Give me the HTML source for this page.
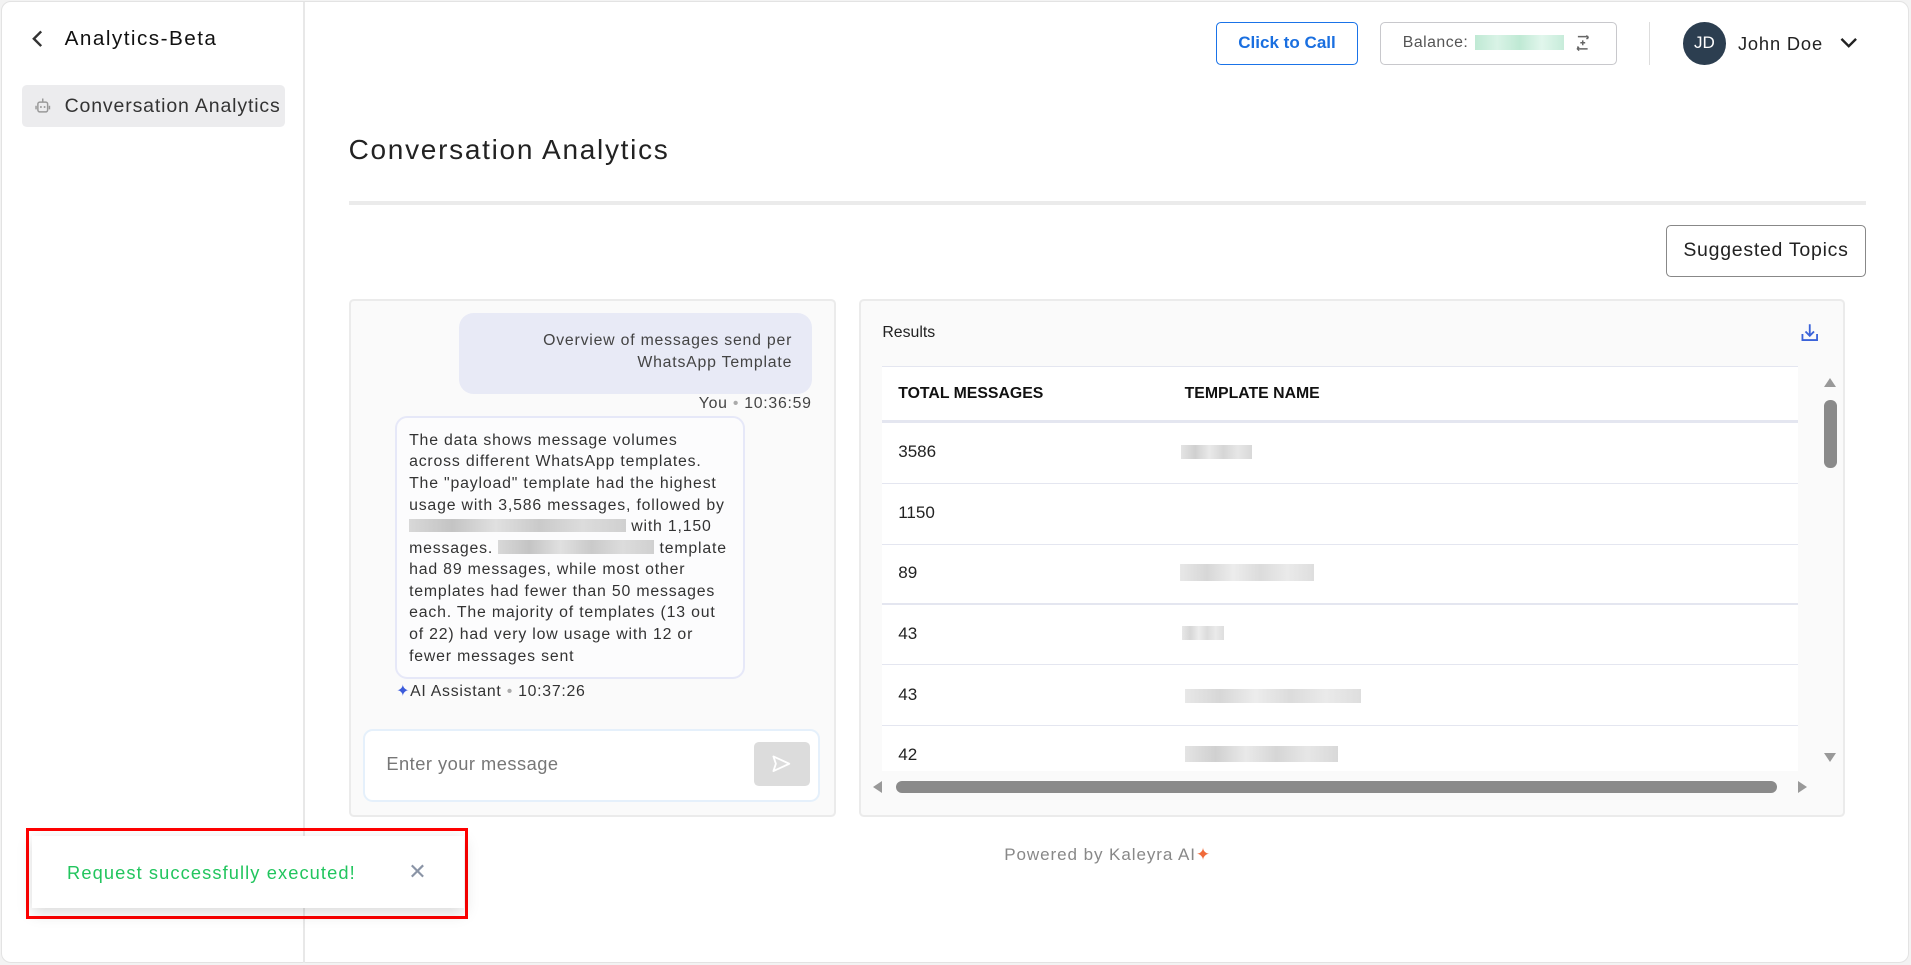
<!DOCTYPE html>
<html><head><meta charset="utf-8">
<style>
*{box-sizing:border-box;margin:0;padding:0}
html,body{width:1911px;height:965px;overflow:hidden;background:#f3f3f3}
#w{zoom:1.21875;width:1568px;height:792px;position:relative;font-family:"Liberation Sans",sans-serif;color:#222}
.a{position:absolute}
.frame{left:1px;top:1px;width:1565px;height:789px;background:#fff;border:1px solid #e3e3e3;border-radius:8px}
.blur{position:absolute;background:linear-gradient(90deg,#d8d8d8,#bcbcbc 20%,#e0e0e0 40%,#c4c4c4 60%,#dcdcdc 80%,#c8c8c8)}
.ib{display:inline-block;height:11px;vertical-align:-1px;background:linear-gradient(90deg,#d8d8d8,#c4c4c4 20%,#e0e0e0 40%,#cacaca 60%,#dcdcdc 80%,#d0d0d0)}
.tr{position:absolute;left:0;width:751px;height:1px;background:#e4e6f0}
.tv{position:absolute;left:13px;font-size:14px;color:#222}
</style></head><body><div id="w">
<div class="a frame"></div>
<div class="a" style="left:249px;top:2px;width:1px;height:788px;background:#e8e8e8"></div>
<svg class="a" style="left:24px;top:24px" width="14" height="16" viewBox="0 0 14 16"><path d="M10 2L4 8l6 6" fill="none" stroke="#333" stroke-width="2"/></svg>
<div class="a" style="left:53px;top:22px;font-size:17px;color:#111;letter-spacing:1.2px">Analytics-Beta</div>
<div class="a" style="left:18px;top:70px;width:216px;height:34px;background:#ececee;border-radius:4px"></div>
<svg class="a" style="left:27px;top:79px" width="16" height="16" viewBox="0 0 16 16"><rect x="4" y="5" width="8" height="8" rx="1.5" fill="none" stroke="#999" stroke-width="1.2"/><path d="M8 2v3M2.5 8v3M13.5 8v3" stroke="#999" stroke-width="1.2"/><circle cx="6.5" cy="9" r=".8" fill="#999"/><circle cx="9.5" cy="9" r=".8" fill="#999"/></svg>
<div class="a" style="left:53px;top:78px;font-size:16px;color:#333;letter-spacing:.7px">Conversation Analytics</div>

<div class="a" style="left:998px;top:18px;width:116px;height:35px;border:1px solid #1a73e8;border-radius:4px;color:#1a6fe0;font-weight:bold;font-size:14px;text-align:center;line-height:33px">Click to Call</div>
<div class="a" style="left:1132px;top:18px;width:195px;height:35px;border:1px solid #c8c8cc;border-radius:4px"></div>
<div class="a" style="left:1151px;top:28px;font-size:13px;color:#555;letter-spacing:.4px">Balance:</div>
<div class="a" style="left:1210px;top:29px;width:73px;height:12px;background:linear-gradient(90deg,#bfe9d4,#d9f3e6,#bfe9d4,#e1f6ec,#c7ecda)"></div>
<svg class="a" style="left:1291px;top:27px" width="16" height="16" viewBox="0 0 16 16"><path d="M4 3h8v2M12 13H4v-2" fill="none" stroke="#666" stroke-width="1.2"/><path d="M8 6v4M6 8h4" stroke="#666" stroke-width="1.2"/><path d="M11 2l1.5 1.5L11 5M5 11.5L3.5 13 5 14.5" fill="none" stroke="#666" stroke-width="1"/></svg>
<div class="a" style="left:1353px;top:18px;width:1px;height:35px;background:#ddd"></div>
<div class="a" style="left:1381px;top:18px;width:35px;height:35px;border-radius:50%;background:#2c3e50;color:#fff;font-size:14px;text-align:center;line-height:35px">JD</div>
<div class="a" style="left:1426px;top:27px;font-size:15px;color:#222;letter-spacing:.7px">John Doe</div>
<svg class="a" style="left:1509px;top:28px" width="16" height="14" viewBox="0 0 16 14"><path d="M2 4l6 6 6-6" fill="none" stroke="#222" stroke-width="2"/></svg>

<div class="a" style="left:286px;top:110px;font-size:23px;color:#222;letter-spacing:1.4px">Conversation Analytics</div>
<div class="a" style="left:286px;top:165px;width:1245px;height:3px;background:#ebebeb"></div>
<div class="a" style="left:1367px;top:185px;width:164px;height:42px;border:1px solid #888;border-radius:4px;font-size:16px;color:#222;text-align:center;line-height:40px;letter-spacing:.6px">Suggested Topics</div>

<div class="a" style="left:286px;top:245px;width:400px;height:425px;background:#fafafa;border:2px solid #ebebeb;border-radius:4px"></div>
<div class="a" style="left:377px;top:257px;width:289px;height:66px;background:#e8eaf6;border-radius:12px;font-size:13px;color:#444;text-align:right;padding:14px 16px 0 0;line-height:18px;letter-spacing:.65px">Overview of messages send per<br>WhatsApp Template</div>
<div class="a" style="left:520px;top:324px;width:146px;text-align:right;font-size:13px;color:#444;letter-spacing:.6px">You <span style="color:#aaa">•</span> 10:36:59</div>
<div class="a" style="left:324px;top:341px;width:287px;height:216px;background:#fcfcfd;border:2px solid #e6e8f8;border-radius:10px;font-size:13px;color:#333;line-height:17.7px;padding:10px 0 0 10px;letter-spacing:.68px;white-space:nowrap">The data shows message volumes<br>across different WhatsApp templates.<br>The "payload" template had the highest<br>usage with 3,586 messages, followed by<br><span class="ib" style="width:178px"></span> with 1,150<br>messages. <span class="ib" style="width:128px"></span> template<br>had 89 messages, while most other<br>templates had fewer than 50 messages<br>each. The majority of templates (13 out<br>of 22) had very low usage with 12 or<br>fewer messages sent</div>
<div class="a" style="left:325px;top:559px;font-size:13px;color:#333;letter-spacing:.6px"><span style="color:#3b5bdb">✦</span>AI Assistant <span style="color:#aaa">•</span> 10:37:26</div>
<div class="a" style="left:298px;top:598px;width:375px;height:60px;background:#fff;border:2px solid #e5f0fb;border-radius:8px"></div>
<div class="a" style="left:317px;top:618px;font-size:15px;color:#777;letter-spacing:.4px">Enter your message</div>
<div class="a" style="left:619px;top:609px;width:46px;height:36px;background:#dcdcdc;border-radius:4px"></div>
<svg class="a" style="left:633px;top:619px" width="17" height="16" viewBox="0 0 17 16"><path d="M2 2l13 6-13 6 2-6z" fill="none" stroke="#fff" stroke-width="1.5" stroke-linejoin="round"/></svg>

<div class="a" style="left:705px;top:245px;width:809px;height:425px;background:#fafafa;border:2px solid #ebebeb;border-radius:4px"></div>
<div class="a" style="left:724px;top:266px;font-size:13px;color:#222">Results</div>
<svg class="a" style="left:1477px;top:265px" width="16" height="16" viewBox="0 0 16 16"><path d="M8 1v9M4.5 7L8 10.5 11.5 7M2 9v5h12V9" fill="none" stroke="#3b63d9" stroke-width="1.5"/></svg>
<div class="a" style="left:724px;top:300px;width:751px;height:333px;background:#fff;overflow:hidden">
 <div class="tr" style="top:0"></div>
 <div class="a" style="left:13px;top:16px;font-size:13px;font-weight:bold;color:#111">TOTAL MESSAGES</div>
 <div class="a" style="left:248px;top:16px;font-size:13px;font-weight:bold;color:#111">TEMPLATE NAME</div>
 <div class="tr" style="top:45px;height:2px"></div>
 <div class="tv" style="top:63px">3586</div><div class="blur" style="left:245px;top:65px;width:58px;height:12px;opacity:.7"></div>
 <div class="tr" style="top:96px"></div>
 <div class="tv" style="top:113px">1150</div>
 <div class="tr" style="top:146px"></div>
 <div class="tv" style="top:162px">89</div><div class="blur" style="left:244px;top:163px;width:110px;height:14px;opacity:.6"></div>
 <div class="tr" style="top:195px"></div>
 <div class="tv" style="top:212px">43</div><div class="blur" style="left:246px;top:214px;width:34px;height:11px;opacity:.6"></div>
 <div class="tr" style="top:245px"></div>
 <div class="tv" style="top:262px">43</div><div class="blur" style="left:248px;top:265px;width:145px;height:12px;opacity:.6"></div>
 <div class="tr" style="top:295px"></div>
 <div class="tv" style="top:311px">42</div><div class="blur" style="left:248px;top:312px;width:126px;height:13px;opacity:.7"></div>
</div>
<div class="a" style="left:1497px;top:310px;width:0;height:0;border-left:5px solid transparent;border-right:5px solid transparent;border-bottom:8px solid #999"></div>
<div class="a" style="left:1497px;top:328px;width:10px;height:56px;border-radius:5px;background:#8a8a8a"></div>
<div class="a" style="left:1497px;top:618px;width:0;height:0;border-left:5px solid transparent;border-right:5px solid transparent;border-top:8px solid #999"></div>
<div class="a" style="left:716px;top:641px;width:0;height:0;border-top:5px solid transparent;border-bottom:5px solid transparent;border-right:8px solid #999"></div>
<div class="a" style="left:735px;top:641px;width:723px;height:10px;border-radius:5px;background:#8a8a8a"></div>
<div class="a" style="left:1475px;top:641px;width:0;height:0;border-top:5px solid transparent;border-bottom:5px solid transparent;border-left:8px solid #999"></div>

<div class="a" style="left:824px;top:693px;font-size:14px;color:#888;letter-spacing:.75px">Powered by Kaleyra AI<span style="color:#f06a3a">✦</span></div>

<div class="a" style="left:21px;top:679px;width:363px;height:75px;border:3px solid #f00"></div>
<div class="a" style="left:26px;top:686px;width:355px;height:59px;background:#fff;box-shadow:0 4px 12px rgba(0,0,0,.15)"></div>
<div class="a" style="left:55px;top:707px;font-size:15px;color:#22c55e;letter-spacing:.9px">Request successfully executed!</div>
<div class="a" style="left:335px;top:705px;font-size:18px;color:#8a94a6">✕</div>
</div></body></html>
